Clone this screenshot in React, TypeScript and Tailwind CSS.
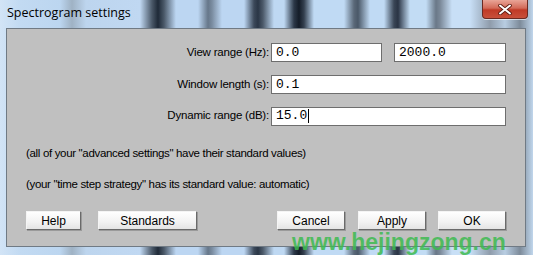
import React from "react";

const stripes =
  "bg-[linear-gradient(90deg,#d2e4f6_0px,#c2daf2_20px,#bcd6f0_60px,#9fb2c4_72px,#bdd5ee_86px,#c0d8f2_140px,#4a5868_152px,#1f2a38_158px,#4a5868_164px,#bcd6f2_176px,#bcd6f2_198px,#66778a_208px,#7a8ca0_212px,#bcd6f2_222px,#bcd6f2_244px,#3c495a_254px,#2a3646_258px,#4c5a6a_263px,#bed8f2_274px,#bed8f2_284px,#2c3848_294px,#141c28_299px,#34404f_304px,#c0daf4_314px,#c0daf4_344px,#5a6878_354px,#4a5868_358px,#c0daf4_370px,#c0daf4_384px,#3a4656_394px,#2a3444_398px,#c2dcf4_410px,#c2dcf4_426px,#6a7888_436px,#7a8898_440px,#c8dff6_452px,#c8dff6_470px,#8f9cab_490px,#b8cde2_505px,#7d8b9a_520px,#c0d6ec_533px)]";

function Btn({ w, children }: { w: string; children: React.ReactNode }) {
  return (
    <div
      className={`${w} h-[19px] flex items-center justify-center bg-[linear-gradient(#ffffff,#f2f2f2_60%,#e4e4e4)] border border-t-[#f4f4f4] border-l-[#f4f4f4] border-r-[#6a6a6a] border-b-[#6a6a6a] shadow-[1px_1px_0_#9a9a9a] text-[12px] text-black`}
    >
      {children}
    </div>
  );
}

function Field({ w, value, caret }: { w: string; value: string; caret?: boolean }) {
  return (
    <div
      className={`${w} h-[19px] bg-white border border-[#6e6e6e] flex items-center pl-[4px] text-[13px] text-black`}
      style={{ fontFamily: '"Liberation Mono", "DejaVu Sans Mono", monospace' }}
    >
      <span>{value}</span>
      {caret && <span className="inline-block w-[1px] h-[14px] bg-black ml-[1px]" />}
    </div>
  );
}

export default function App() {
  return (
    <div
      className={`relative w-[533px] h-[255px] overflow-hidden ${stripes}`}
      style={{ fontFamily: '"Liberation Sans", Arial, sans-serif' }}
    >
      {/* title bar */}
      <div className="h-[28px] flex items-center pl-[7px] pb-[1px]">
        <span className="text-[12.5px] text-black" style={{ fontFamily: '"Open Sans", "Liberation Sans", sans-serif' }}>
          Spectrogram settings
        </span>
      </div>
      {/* close button */}
      <div className="absolute left-[482px] top-0 w-[46px] h-[19px] rounded-b-[4px] border border-t-0 border-[#6b2a22] bg-[linear-gradient(#e9a597,#d36a58_45%,#c03a26_55%,#c8503a)] flex items-center justify-center shadow-[0_1px_0_rgba(255,255,255,0.6)]">
        <svg width="14" height="11" viewBox="0 0 14 11">
          <path d="M2 1.5 L12 9.5 M12 1.5 L2 9.5" stroke="#5a1a10" strokeWidth="3.6" strokeLinecap="round" />
          <path d="M2 1.5 L12 9.5 M12 1.5 L2 9.5" stroke="#ffffff" strokeWidth="2" strokeLinecap="round" />
        </svg>
      </div>

      {/* panel */}
      <div className="ml-[6px] w-[520px] h-[219px] bg-[#c0c0c0] border border-[#707a84] flex flex-col px-[19px] pt-[14px] text-[11.5px] text-black">
        <div className="flex items-center h-[19px]">
          <div className="flex-1 text-right pr-[2px] tracking-[-0.2px]">View range (Hz):</div>
          <div className="w-[235px] flex justify-between">
            <Field w="w-[111px]" value="0.0" />
            <Field w="w-[112px]" value="2000.0" />
          </div>
        </div>
        <div className="flex items-center h-[19px] mt-[13px]">
          <div className="flex-1 text-right pr-[2px] tracking-[-0.2px]">Window length (s):</div>
          <Field w="w-[235px]" value="0.1" />
        </div>
        <div className="flex items-center h-[20px] mt-[12px]">
          <div className="flex-1 text-right pr-[2px] tracking-[-0.2px]">Dynamic range (dB):</div>
          <Field w="w-[235px]" value="15.0" caret />
        </div>
        <div className="mt-[21px] h-[13px] leading-[13px] tracking-[-0.33px]">(all of your "advanced settings" have their standard values)</div>
        <div className="mt-[18px] h-[13px] leading-[13px] tracking-[-0.33px]">(your "time step strategy" has its standard value: automatic)</div>
        <div className="mt-[20px] flex items-center">
          <Btn w="w-[55px]">Help</Btn>
          <div className="ml-[17px]">
            <Btn w="w-[99px]">Standards</Btn>
          </div>
          <div className="flex-1" />
          <Btn w="w-[68px]">Cancel</Btn>
          <div className="ml-[13px]">
            <Btn w="w-[68px]">Apply</Btn>
          </div>
          <div className="ml-[12px]">
            <Btn w="w-[68px]">OK</Btn>
          </div>
        </div>
      </div>

      {/* watermark */}
      <div className="absolute left-[292px] top-[232px] text-[23px] font-bold text-[#3dbb50]/85 leading-[21px]" style={{ fontFamily: '"Liberation Sans", Arial, sans-serif' }}>
        www.hejingzong.cn
      </div>
    </div>
  );
}
